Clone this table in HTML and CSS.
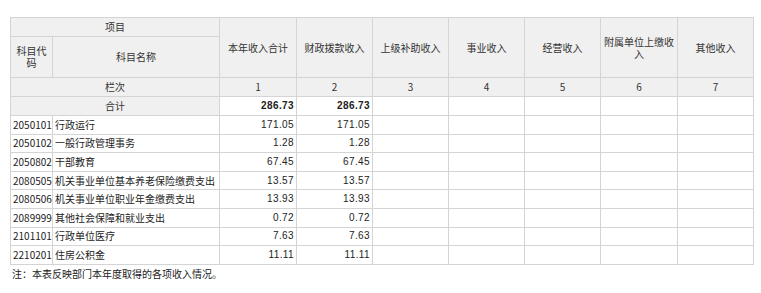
FILE: index.html
```html
<!DOCTYPE html>
<html lang="zh">
<head>
<meta charset="utf-8">
<link rel="stylesheet" href="styles.css">
</head>
<body>
<div class="page">
<table class="report">
<colgroup>
<col class="c-code"><col class="c-name"><col class="c77"><col class="c76"><col class="c76"><col class="c76"><col class="c76"><col class="c77"><col class="c76">
</colgroup>
<thead>
<tr class="h1"><th colspan="2">项目</th><th rowspan="2">本年收入合计</th><th rowspan="2">财政拨款收入</th><th rowspan="2">上级补助收入</th><th rowspan="2">事业收入</th><th rowspan="2">经营收入</th><th rowspan="2">附属单位上缴收入</th><th rowspan="2">其他收入</th></tr>
<tr class="h2"><th>科目代码</th><th>科目名称</th></tr>
<tr class="h3"><th colspan="2">栏次</th><th>1</th><th>2</th><th>3</th><th>4</th><th>5</th><th>6</th><th>7</th></tr>
</thead>
<tbody>
<tr class="total"><th colspan="2">合计</th><td class="num b">286.73</td><td class="num b">286.73</td><td></td><td></td><td></td><td></td><td></td></tr>
<tr><td>2050101</td><td>行政运行</td><td class="num">171.05</td><td class="num">171.05</td><td></td><td></td><td></td><td></td><td></td></tr>
<tr><td>2050102</td><td>一般行政管理事务</td><td class="num">1.28</td><td class="num">1.28</td><td></td><td></td><td></td><td></td><td></td></tr>
<tr><td>2050802</td><td>干部教育</td><td class="num">67.45</td><td class="num">67.45</td><td></td><td></td><td></td><td></td><td></td></tr>
<tr><td>2080505</td><td>机关事业单位基本养老保险缴费支出</td><td class="num">13.57</td><td class="num">13.57</td><td></td><td></td><td></td><td></td><td></td></tr>
<tr><td>2080506</td><td>机关事业单位职业年金缴费支出</td><td class="num">13.93</td><td class="num">13.93</td><td></td><td></td><td></td><td></td><td></td></tr>
<tr><td>2089999</td><td>其他社会保障和就业支出</td><td class="num">0.72</td><td class="num">0.72</td><td></td><td></td><td></td><td></td><td></td></tr>
<tr><td>2101101</td><td>行政单位医疗</td><td class="num">7.63</td><td class="num">7.63</td><td></td><td></td><td></td><td></td><td></td></tr>
<tr><td>2210201</td><td>住房公积金</td><td class="num">11.11</td><td class="num">11.11</td><td></td><td></td><td></td><td></td><td></td></tr>
</tbody>
</table>
<p class="note">注：本表反映部门本年度取得的各项收入情况。</p>
</div>
</body>
</html>
```
FILE: styles.css
```css
html, body {
  margin: 0;
  padding: 0;
  background: #ffffff;
}
body {
  font-family: "Noto Sans CJK SC", "Liberation Sans", sans-serif;
  font-size: 10px;
  color: #222;
}
.page {
  padding: 17px 0 0 10px;
}
.report {
  border-collapse: collapse;
  table-layout: fixed;
  width: 743px;
}
.c-code { width: 42px; }
.c-name { width: 167px; }
.c77 { width: 77px; }
.c76 { width: 76px; }
.report th, .report td {
  border: 1px solid #d4d4d4;
  padding: 0 2px;
  line-height: 12px;
  overflow: hidden;
}
.report th {
  background: #f0f0f0;
  font-weight: normal;
  color: #333;
  text-align: center;
}
.report td {
  background: #fff;
  white-space: nowrap;
}
.h1 { height: 19px; }
.h2 { height: 41px; }
.h3 { height: 19px; }
.total { height: 19px; }
tbody tr { height: 18.6px; }
.num {
  text-align: right;
  font-family: "Liberation Sans", sans-serif;
  letter-spacing: 0.4px;
}
.b { font-weight: bold; }
.note {
  margin: 3px 0 0 2px;
  font-size: 10px;
  line-height: 12px;
  color: #222;
}
```
